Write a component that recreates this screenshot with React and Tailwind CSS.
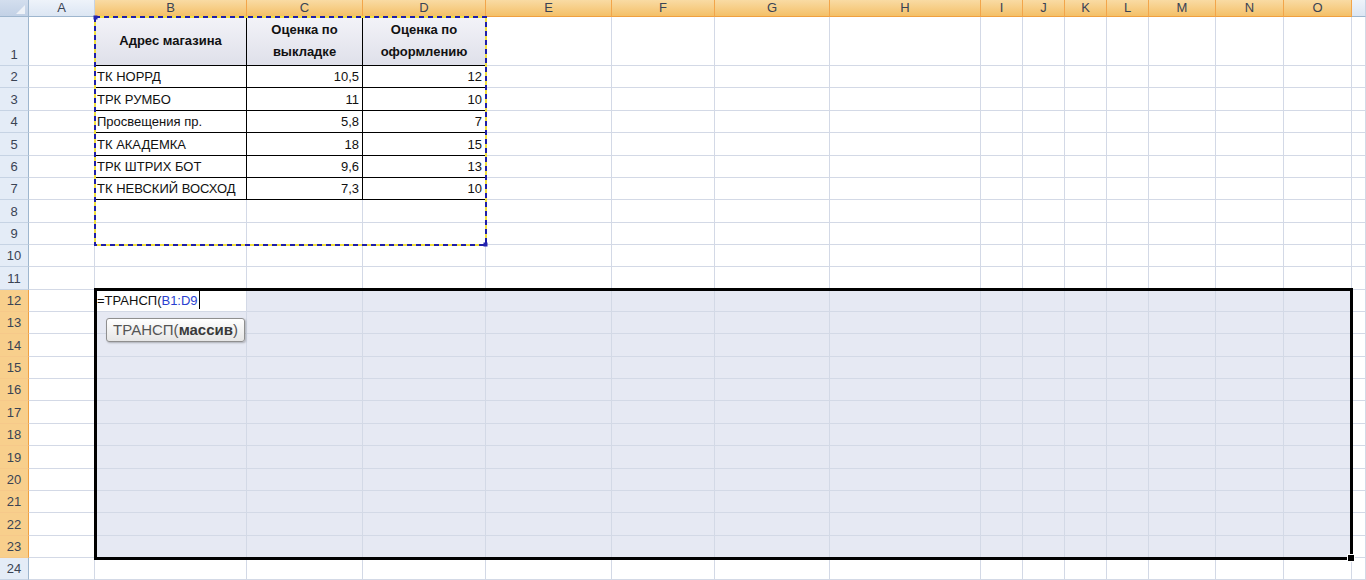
import React from "react";

const COLS = ["A","B","C","D","E","F","G","H","I","J","K","L","M","N","O","P"];
const ROWS = Array.from({ length: 24 }, (_, i) => i + 1);

const data = {
  "B1": { t: "Адрес магазина", h: true },
  "C1": { t: ["Оценка по", "выкладке"], h: true },
  "D1": { t: ["Оценка по", "оформлению"], h: true },
  "B2": { t: "ТК НОРРД" }, "C2": { t: "10,5", n: true }, "D2": { t: "12", n: true },
  "B3": { t: "ТРК РУМБО" }, "C3": { t: "11", n: true }, "D3": { t: "10", n: true },
  "B4": { t: "Просвещения пр." }, "C4": { t: "5,8", n: true }, "D4": { t: "7", n: true },
  "B5": { t: "ТК АКАДЕМКА" }, "C5": { t: "18", n: true }, "D5": { t: "15", n: true },
  "B6": { t: "ТРК ШТРИХ БОТ" }, "C6": { t: "9,6", n: true }, "D6": { t: "13", n: true },
  "B7": { t: "ТК НЕВСКИЙ ВОСХОД" }, "C7": { t: "7,3", n: true }, "D7": { t: "10", n: true },
};

function ColHeader({ k, ci }) {
  const hi = ci >= 1 && ci <= 14;
  return (
    <div
      className={
        hi
          ? "flex items-center justify-center border-r border-b border-r-[#f2a54a] border-b-[#f0a040] bg-gradient-to-b from-[#f9dba3] to-[#f4c067] text-[13px] text-[#3a4354]"
          : "flex items-center justify-center border-r border-b border-r-[#c6d3e4] border-b-[#9eb6ce] bg-gradient-to-b from-[#eef3fa] to-[#dce6f3] text-[13px] text-[#3a4354]"
      }
    >
      {k === "P" ? "" : k}
    </div>
  );
}

function RowHeader({ r }) {
  const hi = r >= 12 && r <= 23;
  return (
    <div
      className={
        hi
          ? "flex items-end justify-center pb-[1px] border-r border-b border-r-[#f0a040] border-b-[#f6c98a] bg-[#f8cf8c] text-[13px] leading-[18px] text-[#3a4354]"
          : "flex items-end justify-center pb-[1px] border-r border-b border-r-[#9eb6ce] border-b-[#c6d3e4] bg-[#e4ecf7] text-[13px] leading-[18px] text-[#3a4354]"
      }
    >
      {r}
    </div>
  );
}

function Cell({ r, ci, k }) {
  const id = k + r;
  const d = data[id];
  const inTable = r <= 7 && ci >= 1 && ci <= 3;
  const inSel = r >= 12 && r <= 23 && ci >= 1 && ci <= 14;
  const active = r === 12 && ci === 1;
  let cls = "relative border-r border-b overflow-visible whitespace-nowrap text-[13px] text-[#111] ";
  cls += inTable ? "border-r-black border-b-black " : "border-r-[#d3d9e6] border-b-[#d3d9e6] ";
  if (r === 1 && inTable) cls += "bg-gradient-to-b from-[#f3f3f8] to-[#dfe0ea] ";
  else if (inSel && !active) cls += "bg-[#e6e9f3] ";
  else cls += "bg-white ";

  if (active) {
    return (
      <div className={cls + "flex items-end pl-[2px] pb-[1px] leading-[19px]"}>
        <span>=ТРАНСП(</span>
        <span className="text-[#2a3fd0]">B1:D9</span>
        <span className="ml-[1px] mb-[1px] inline-block h-[18px] w-px bg-black"></span>
      </div>
    );
  }
  if (!d) return <div className={cls}></div>;
  if (d.h) {
    const lines = Array.isArray(d.t) ? d.t : [d.t];
    return (
      <div className={cls + "flex flex-col items-center justify-center font-bold leading-[22px]"}>
        {lines.map((l) => (
          <span key={l}>{l}</span>
        ))}
      </div>
    );
  }
  return (
    <div className={cls + (d.n ? "flex items-end justify-end pr-[3px] pb-[1px] leading-[19px]" : "flex items-end pl-[2px] pb-[1px] leading-[19px]")}>
      {d.t}
    </div>
  );
}

export default function App() {
  return (
    <div
      className="relative h-[580px] w-[1366px] overflow-hidden bg-white"
      style={{ fontFamily: '"Liberation Sans", Arial, sans-serif' }}
    >
      <div className="grid grid-cols-[29px_66px_152px_116px_123px_126px_103px_115px_151px_42px_42px_42px_42px_67px_68px_68px_14px] grid-rows-[17px_49px_22px_23px_22px_23px_22px_22px_23px_22px_22px_23px_22px_22px_23px_22px_22px_23px_22px_23px_22px_22px_23px_22px_22px]">
        {/* corner */}
        <div className="relative border-r border-b border-r-[#9eb6ce] border-b-[#9eb6ce] bg-gradient-to-b from-[#d3deee] to-[#c2d1e6]">
          <svg className="absolute bottom-[2px] right-[3px]" width="9" height="9" viewBox="0 0 9 9">
            <polygon points="9,0 9,9 0,9" fill="#eef2f8" />
          </svg>
        </div>
        {COLS.map((k, ci) => (
          <ColHeader key={k} k={k} ci={ci} />
        ))}
        {ROWS.map((r) => (
          <React.Fragment key={r}>
            <RowHeader r={r} />
            {COLS.map((k, ci) => (
              <Cell key={k + r} r={r} ci={ci} k={k} />
            ))}
          </React.Fragment>
        ))}
      </div>

      {/* marching ants around B1:D9 */}
      <svg className="absolute left-[92px] top-[14px]" width="398" height="236" viewBox="0 0 398 236">
        <rect x="3" y="3" width="391" height="228" fill="none" stroke="#f0e040" strokeWidth="2" />
        <rect x="3" y="3" width="391" height="228" fill="none" stroke="#1f1fa8" strokeWidth="2" strokeDasharray="5 4" />
        <rect x="1.5" y="1.5" width="4" height="4" fill="#2323b0" />
        <rect x="391.5" y="228.5" width="4" height="4" fill="#2323b0" />
      </svg>

      {/* selection border */}
      <div className="absolute left-[94px] top-[288px] h-[272px] w-[1259px] border-[3px] border-black"></div>
      <div className="absolute left-[1347px] top-[554px] h-[8px] w-[8px] border border-white bg-black"></div>

      {/* function tooltip */}
      <div className="absolute left-[106px] top-[318px] flex h-[24px] w-[139px] items-center rounded-[3px] border border-[#8f8f8f] bg-gradient-to-b from-white to-[#e6e6e6] pl-[6px] text-[15px] leading-[20px] text-[#555] shadow-[1px_1px_2px_rgba(0,0,0,0.25)]">
        <span>ТРАНСП(</span>
        <span className="font-bold text-[#3a3a3a]">массив</span>
        <span>)</span>
      </div>
    </div>
  );
}
